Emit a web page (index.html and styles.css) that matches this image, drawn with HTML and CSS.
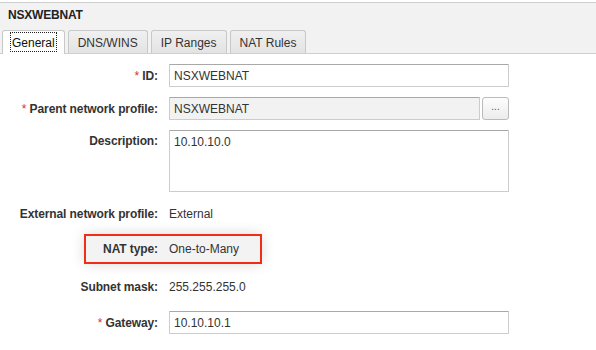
FILE: index.html
```html
<!DOCTYPE html>
<html>
  <head>
    <meta charset="UTF-8">
    <title>NSXWEBNAT</title>
    <link rel="stylesheet" href="styles.css">
  </head>
  <body>
    <div class="panel-header">
      <div class="panel-title">NSXWEBNAT</div>
      <div class="tabs">
        <div class="tab active"><span class="tab-focus">General</span></div>
        <div class="tab">DNS/WINS</div>
        <div class="tab">IP Ranges</div>
        <div class="tab">NAT Rules</div>
      </div>
    </div>

    <div class="form">
      <div class="row">
        <label class="label" for="id-field"><span class="req">*</span> ID:</label>
        <input class="field" id="id-field" type="text" value="NSXWEBNAT">
      </div>
      <div class="row">
        <label class="label" for="parent-field"><span class="req">*</span> Parent network profile:</label>
        <input class="field readonly" id="parent-field" type="text" value="NSXWEBNAT" readonly>
        <button class="browse">...</button>
      </div>
      <div class="row top">
        <label class="label" for="desc-field">Description:</label>
        <textarea class="field area" id="desc-field">10.10.10.0</textarea>
      </div>
      <div class="row text-row ext-row">
        <span class="label">External network profile:</span>
        <span class="value">External</span>
      </div>
      <div class="row nat-row">
        <div class="highlight">
          <span class="label">NAT type:</span>
          <span class="value">One-to-Many</span>
        </div>
      </div>
      <div class="row text-row subnet-row">
        <span class="label">Subnet mask:</span>
        <span class="value">255.255.255.0</span>
      </div>
      <div class="row gateway-row">
        <label class="label" for="gw-field"><span class="req">*</span> Gateway:</label>
        <input class="field" id="gw-field" type="text" value="10.10.10.1">
      </div>
    </div>
  </body>
</html>
```

FILE: styles.css
```css
body {
margin: 0;
font-family: "Liberation Sans", Arial, sans-serif;
font-size: 12px;
color: #333;
background: #fff;
}

.panel-header {
margin-top: 2px;
background: #f2f2f2;
border-top: 1px solid #cfcfcf;
border-bottom: 1px solid #cfcfcf;
padding: 0 2px;
}

.panel-title {
font-weight: bold;
line-height: 15px;
padding: 5px 6px 7px;
color: #222;
letter-spacing: -0.2px;
}

.tabs {
display: flex;
gap: 3px;
align-items: flex-end;
height: 23px;
}

.tab {
line-height: 14px;
padding: 5px 9px 3px;
border: 1px solid #c8c8c8;
border-bottom: none;
border-radius: 3px 3px 0 0;
background: linear-gradient(#f0f0f0, #e3e3e3);
color: #333;
}

.tab.active {
background: #fff;
padding: 1px 7px 2px;
margin-bottom: -1px;
color: #111;
}

.tab-focus {
display: inline-block;
padding: 4px 2px 2px;
outline: 1px dotted #222;
outline-offset: -1px;
}

.form {
padding-top: 10px;
}

.row {
display: flex;
align-items: center;
margin-bottom: 10px;
}

.row.top {
align-items: flex-start;
}

.label {
width: 158px;
flex: none;
text-align: right;
font-weight: bold;
letter-spacing: -0.1px;
margin-right: 11px;
color: #333;
}

.row.top .label {
padding-top: 4px;
}

.req {
color: #d8321f;
font-weight: normal;
}

.value {
color: #333;
}

.field {
box-sizing: border-box;
width: 340px;
height: 23px;
margin: 0;
padding: 2px 4px;
border: 1px solid #ccc;
border-top-color: #a8a8a8;
border-radius: 1px;
font-family: "Liberation Sans", Arial, sans-serif;
font-size: 12px;
color: #333;
background: #fff;
}

.field.readonly {
width: 311px;
background: #f2f2f2;
}

.field.area {
height: 62px;
resize: none;
padding: 4px 4px;
}

.browse {
box-sizing: border-box;
width: 27px;
height: 23px;
margin: 0 0 0 2px;
padding: 0 0 4px;
border: 1px solid #bbb;
border-radius: 3px;
background: linear-gradient(#fdfdfd, #ececec);
font-family: "Liberation Sans", Arial, sans-serif;
font-size: 10px;
color: #7a3b6a;
}

.text-row {
height: 23px;
}

.ext-row {
margin-bottom: 9px;
}

.nat-row {
height: 30px;
margin-bottom: 11px;
}

.highlight {
box-sizing: border-box;
display: flex;
align-items: center;
margin-left: 84px;
width: 178px;
height: 30px;
border: 2px solid #f02d16;
background: #f3f3f3;
box-shadow: 0 0 14px rgba(0, 0, 0, 0.14);
}

.highlight .label {
width: 72px;
}

.subnet-row {
margin-bottom: 13px;
}
```
